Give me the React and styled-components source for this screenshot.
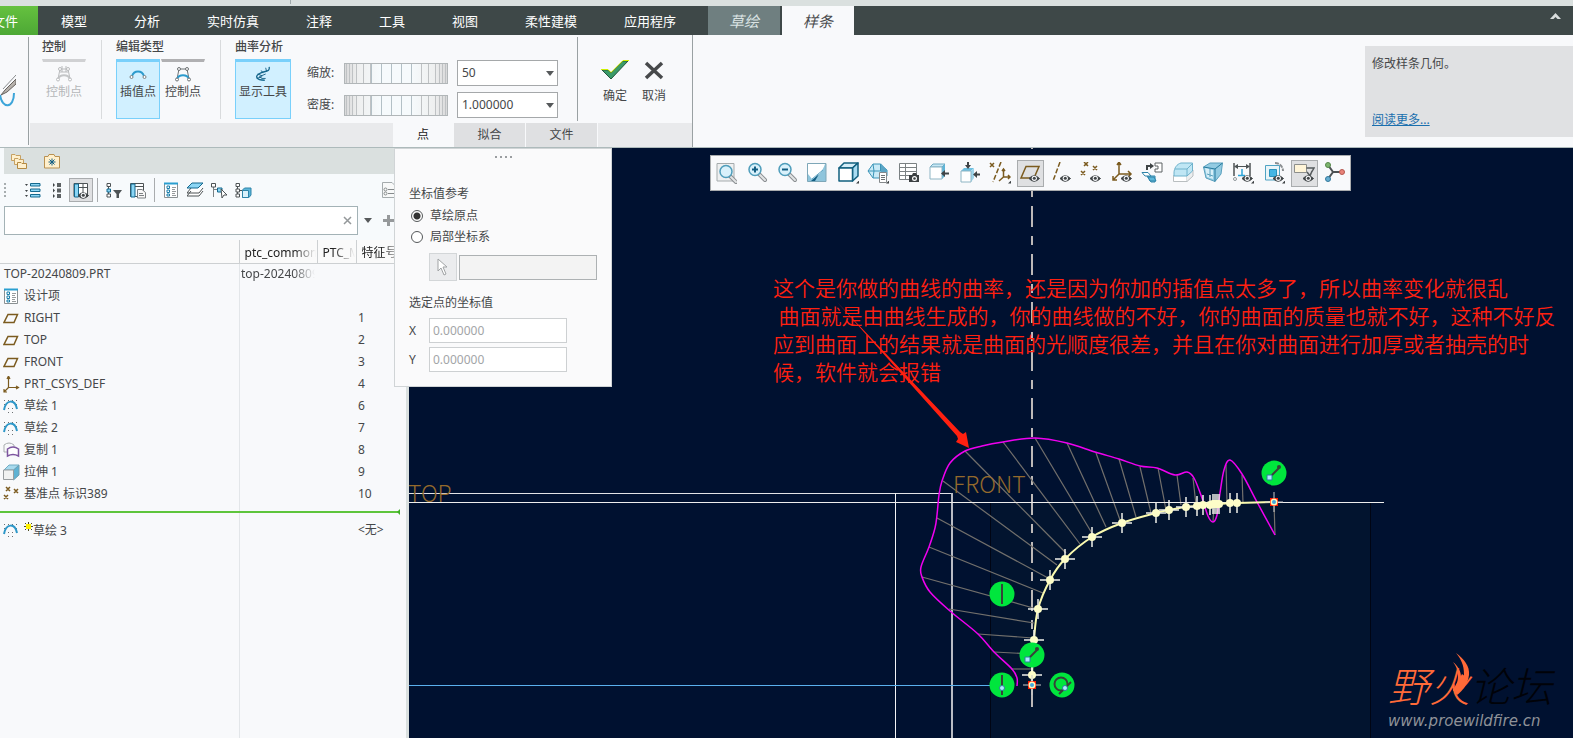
import React, { useState } from 'react';
import styled, { createGlobalStyle } from 'styled-components';

const TABS = ['模型', '分析', '实时仿真', '注释', '工具', '视图', '柔性建模', '应用程序'];

const FEATURES = [
  { icon: 'design', name: '设计项', id: '' },
  { icon: 'plane', name: 'RIGHT', id: '1' },
  { icon: 'plane', name: 'TOP', id: '2' },
  { icon: 'plane', name: 'FRONT', id: '3' },
  { icon: 'csys', name: 'PRT_CSYS_DEF', id: '4' },
  { icon: 'sketch', name: '草绘 1', id: '6' },
  { icon: 'sketch', name: '草绘 2', id: '7' },
  { icon: 'copy', name: '复制 1', id: '8' },
  { icon: 'extrude', name: '拉伸 1', id: '9' },
  { icon: 'points', name: '基准点 标识389', id: '10' },
];

const VIEW_TOOLS = [
  ['refit', '重新调整'], ['zoomIn', '放大'], ['zoomOut', '缩小'], ['repaint', '重画'],
  ['shading', '显示样式'], ['saved', '已保存方向'], ['manager', '视图管理器'],
  ['sideView', '视图法向'], ['topView', '草绘视图'], ['datum', '基准显示过滤器'],
  ['planeEye', '平面显示'], ['axisEye', '轴显示'], ['pointEye', '点显示'], ['csysEye', '坐标系显示'],
  ['swap', '切换'], ['clip', '修剪模型'], ['box', '透视图'], ['dimEye', '草绘器显示过滤器'],
  ['sectionEye', '截面'], ['noteEye', '注释显示'], ['spin', '旋转中心'],
];
const PRESSED_TOOLS = ['planeEye', 'noteEye'];

// comb of the curvature plot, [tip x, tip y, base x, base y]
const COMB = [
  [1011, 669, 1032, 669], [994, 652, 1032, 654], [978, 634, 1033, 638], [949, 609, 1034, 623],
  [922, 577, 1037, 609], [929, 547, 1043, 593], [937, 518, 1050, 579], [943, 481, 1057, 565],
  [965, 451, 1066, 553], [1003, 442, 1080, 544], [1035, 438, 1093, 535], [1067, 443, 1106, 527],
  [1096, 453, 1120, 520], [1119, 459, 1136, 517], [1140, 467, 1151, 513], [1158, 468, 1166, 510],
  [1177, 475, 1181, 505], [1193, 478, 1196, 505], [1213, 522, 1214, 505], [1226, 465, 1227, 503],
  [1242, 475, 1243, 503], [1274, 502, 1275, 535],
];

const CURVATURE = [
  [1017, 686], [1017, 678], [1012, 669], [994, 652], [978, 634], [950, 611], [930, 592],
  [922, 577], [921, 567], [929, 547], [935, 528], [937, 515], [939, 495], [942, 481],
  [950, 463], [965, 451], [982, 446], [1003, 442], [1035, 438], [1067, 443], [1095, 452],
  [1119, 459], [1140, 466], [1157, 468], [1175, 475], [1187, 472], [1194, 478], [1202, 498],
  [1208, 516], [1213, 522], [1217, 515], [1220, 493], [1224, 470], [1230, 460], [1242, 474],
  [1257, 502], [1275, 535],
];

const SPLINE = [
  [1032, 685], [1032, 675], [1034, 640], [1038, 609], [1050, 580], [1065, 559], [1092, 537],
  [1122, 523], [1156, 513], [1169, 510], [1186, 507], [1197, 506], [1203, 505], [1210, 505],
  [1213, 504], [1215, 504], [1217, 504], [1219, 504], [1230, 503], [1237, 503], [1274, 502],
];

function smoothPath(points) {
  let d = `M${points[0].join(' ')}`;
  for (let i = 0; i < points.length - 1; i += 1) {
    const p0 = points[i - 1] || points[i];
    const p1 = points[i];
    const p2 = points[i + 1];
    const p3 = points[i + 2] || p2;
    const c1 = [p1[0] + (p2[0] - p0[0]) / 6, p1[1] + (p2[1] - p0[1]) / 6];
    const c2 = [p2[0] - (p3[0] - p1[0]) / 6, p2[1] - (p3[1] - p1[1]) / 6];
    d += `C${c1.join(' ')} ${c2.join(' ')} ${p2.join(' ')}`;
  }
  return d;
}

const Eye = () => (
  <g>
    <path d="M9 16.500Q14 11 19.500 16.500Q14 22 9 16.500Z" fill="#3f4446" stroke="#3f4446" />
    <circle cx="14.300" cy="16.300" r="2.600" fill="#f8f9fb" />
    <circle cx="14.300" cy="16.300" r="1.500" fill="#3f4446" />
  </g>
);

const Corner = () => <path d="M22 17.500V21.500H18Z" fill="#3f4446" />;

const Magnifier = () => (
  <g>
    <path d="M12 12L18 18" stroke="#8b8f92" strokeWidth="4" strokeLinecap="round" />
    <path d="M13 13L18 18" stroke="#e2e4e5" strokeWidth="2" strokeLinecap="round" />
    <circle cx="8" cy="7.500" r="6" fill="#d9f1fb" stroke="#4f9dbb" strokeWidth="1.500" />
  </g>
);

const VIEW_ICONS = {
  refit: (
    <g>
      <path d="M1 1.500H18V19H1Z" fill="#eef0f1" stroke="#a5abad" />
      <g transform="translate(2 2)"><Magnifier /></g>
    </g>
  ),
  zoomIn: (
    <g>
      <Magnifier />
      <path d="M8 4.500V10.500M5 7.500H11" stroke="#125e83" strokeWidth="2" />
    </g>
  ),
  zoomOut: (
    <g>
      <Magnifier />
      <path d="M5 7.500H11" stroke="#125e83" strokeWidth="2" />
    </g>
  ),
  repaint: (
    <g>
      <path d="M.5 1.500H19V19.500H.5Z" fill="#8fc5dc" stroke="#7ea7b8" />
      <path d="M1 2H18C16 8 12 14 5 17L1 12Z" fill="#fff" />
      <path d="M4 19L12 12L8 19Z" fill="#125e83" />
      <path d="M5 17L16 8" stroke="#62a5c3" />
    </g>
  ),
  shading: (
    <g stroke="#12607f" strokeWidth="1.500" strokeLinejoin="round">
      <path d="M1 6L6 1H20L14.500 6Z" fill="#d3edf8" />
      <path d="M14.500 6L20 1V14L14.500 19Z" fill="#a9dcf2" />
      <path d="M1 6H14.500V19H1Z" fill="#fff" />
      <g stroke="none"><Corner /></g>
    </g>
  ),
  saved: (
    <g>
      <path d="M0 9L5 2H12L19 8V14H13V16H5Z" fill="#c9eaf7" stroke="#3b94b7" />
      <path d="M12.500 1L19 8V11H12.500Z" fill="#5aa5c6" />
      <path d="M0 9H12.500V2M5 2L6 9L5 16" stroke="#3b94b7" fill="none" />
      <path d="M11.500 10.500H18.500V20.500H11.500Z" fill="#fff" stroke="#85898b" />
      <path d="M13 13.500H17M13 15.500H17M13 17.500H17" stroke="#6d7173" />
      <Corner />
    </g>
  ),
  manager: (
    <g>
      <path d="M.5 1.500H17.500V17.500H.5ZM.5 5.500H17.500M.5 9.500H17.500M.5 13.500H17.500M6.500 1.500V17.500" fill="#fff" stroke="#7b8183" />
      <path d="M10 13H13L14 11H17L18 13H20V20H10Z" fill="#3c4042" />
      <circle cx="15.500" cy="16.500" r="2.500" fill="#fff" />
      <circle cx="15.500" cy="16.500" r="1.300" fill="#3c4042" />
    </g>
  ),
  sideView: (
    <g>
      <path d="M1 5L4 2H16L13 5Z" fill="#c8e8f5" stroke="#6ea9c1" />
      <path d="M13 5L16 2V14L13 17Z" fill="#5fb5d8" />
      <path d="M1 5H13V17H1Z" fill="#fff" stroke="#8eb5c4" />
      <path d="M20 11.500H14" stroke="#3f4446" strokeWidth="2" />
      <path d="M12 11.500L16 8V15Z" fill="#3f4446" />
    </g>
  ),
  topView: (
    <g>
      <path d="M1 9L4 6H14L11 9Z" fill="#6dbfe0" />
      <path d="M11 9L14 6V16L11 20Z" fill="#9fd6ec" />
      <path d="M1 9H11V20H1Z" fill="#fff" stroke="#8eb5c4" />
      <path d="M8 0V4M20 12.500H16" stroke="#3f4446" strokeWidth="2" />
      <path d="M8 7L5 3H11ZM13 12.500L17 9V16Z" fill="#3f4446" />
    </g>
  ),
  datum: (
    <g stroke="#7b5b1f" fill="none" strokeWidth="1.500">
      <path d="M0 1L4 5M4 1L0 5" />
      <path d="M11 0L3 20" strokeDasharray="5 2" />
      <path d="M13.500 7V15H20M13.500 15L9 19M12 9L13.500 7L15 9M18 13L20 15L18 17" />
      <g stroke="none"><Corner /></g>
    </g>
  ),
  planeEye: (
    <g>
      <path d="M6 4.500H19L14 16H1Z" fill="none" stroke="#7b5b1f" strokeWidth="1.500" />
      <Eye />
    </g>
  ),
  axisEye: (
    <g>
      <path d="M9 0L2 19" stroke="#7b5b1f" strokeWidth="1.500" strokeDasharray="5 2" />
      <Eye />
    </g>
  ),
  pointEye: (
    <g>
      <path d="M3 0L7 4M7 0L3 4M12 4L16 8M16 4L12 8M0 9L4 13M4 9L0 13" stroke="#7b5b1f" strokeWidth="1.500" />
      <Eye />
    </g>
  ),
  csysEye: (
    <g>
      <path d="M7 1V12H19M7 12L1 18M5 3L7 0L9 3M16 9L19 12L16 15M1 14V18H5" fill="none" stroke="#7b5b1f" strokeWidth="1.500" />
      <Eye />
    </g>
  ),
  swap: (
    <g>
      <path d="M5 8V4H9" stroke="#3f4446" fill="none" strokeWidth="2" />
      <path d="M12 4L8 1V7Z" fill="#3f4446" />
      <path d="M13 1H20V10H13V7H16V4H13Z" fill="#fff" stroke="#5d6264" />
      <path d="M5 14H13V20H9Z" fill="#8ed0ea" stroke="#2e84a9" />
      <path d="M0 10.500H6L9 14H3Z" fill="#fff" stroke="#2e84a9" />
      <path d="M6 15H12L14 19H8Z" fill="#5db6d9" stroke="#2e84a9" />
    </g>
  ),
  clip: (
    <g>
      <path d="M.5 13.500H14V19.500H.5Z" fill="#fff" stroke="#b9bec0" />
      <path d="M14 13L20 8V14L14 19.500" fill="#eceeef" stroke="#b9bec0" />
      <path d="M1 11C1 6 4 2 8 1H19.500V9L14 14H1Z" fill="#bfe6f4" stroke="#6fb2cc" />
      <path d="M2 7H14V14M14 7L19 2" stroke="#6fb2cc" fill="none" />
    </g>
  ),
  box: (
    <g>
      <path d="M.5 5L7 1H19.500L18 12L12 19.500L3 16Z" fill="#93cbe2" stroke="#5aa0bd" />
      <path d="M.5 5L12 7L19.500 1M12 7V19.500" stroke="#24799d" fill="none" />
      <path d="M2 6L10 8V17L4 15Z" fill="#d7eff8" />
      <path d="M7 7V15M4 12L10 14" stroke="#5aa0bd" />
    </g>
  ),
  dimEye: (
    <g>
      <path d="M1 1V14M17 1V14" stroke="#4d5355" strokeWidth="1.500" />
      <path d="M2 4.500H16" stroke="#4d5355" />
      <path d="M1 4.500L5 2V7ZM17 4.500L13 2V7Z" fill="#4d5355" />
      <path d="M9 7V13M5 13.500H12" stroke="#2ba4d8" strokeWidth="1.500" />
      <circle cx="2" cy="17" r="1.500" fill="#fff" stroke="#90979a" />
      <Eye />
      <Corner />
    </g>
  ),
  sectionEye: (
    <g>
      <path d="M1.500 3.500H15.500V18H1.500Z" fill="#e9f4f8" stroke="#4fa3c4" />
      <path d="M11 1C15 1 19 4 19 9" fill="none" stroke="#8b8f92" strokeWidth="2" strokeDasharray="4 1" />
      <path d="M5.500 7.500H12.500V14.500H5.500Z" fill="#45b6e4" stroke="#2b93bd" />
      <Eye />
      <Corner />
    </g>
  ),
  noteEye: (
    <g>
      <path d="M.5 2.500H12.500V10.500H.5Z" fill="#fff5d8" stroke="#8d8f8c" />
      <path d="M12.500 6H20L16 13M13 10L16 14L18 9" fill="none" stroke="#565b5d" strokeWidth="1.500" />
      <Eye />
    </g>
  ),
  spin: (
    <g>
      <path d="M3 3L8 10L3 17M8 10H17" stroke="#4c5153" strokeWidth="2" fill="none" />
      <circle cx="3" cy="3" r="2.500" fill="#7db56e" stroke="#55874a" />
      <circle cx="17" cy="10" r="2.500" fill="#e98379" stroke="#b45850" />
      <circle cx="3" cy="17" r="2.500" fill="#66add1" stroke="#34799c" />
    </g>
  ),
};

const TREE_ICONS = {
  design: (
    <g>
      <path d="M1.500 1.500H14.500V15.500H1.500Z" fill="#fff" stroke="#8a9093" />
      <path d="M1 1.500H15" stroke="#2a9fd0" strokeWidth="2" />
      <path d="M4 4H6.500V6.500H4ZM4 8H6.500V10.500H4ZM4 12H6.500V14H4Z" fill="none" stroke="#1b7fab" />
      <path d="M9 5.500H13M9 7.500H12M9 9.500H13M9 11.500H12M9 13.500H13" stroke="#979b9d" />
    </g>
  ),
  plane: <path d="M5 4.500H14.500L11 12.500H1Z" fill="none" stroke="#7b5b1f" strokeWidth="1.500" />,
  csys: <path d="M5.500 1V11.500H15M5.500 11.500L1 16M4 3L5.500 0L7 3M13 10L15.500 11.500L13 13M1 13V16H4" fill="none" stroke="#7b5b1f" strokeWidth="1.200" />,
  sketch: (
    <g>
      <path d="M1 2.500H16M1 6.500H4M13 6.500H16M5 10.500H12M5 14.500H13" stroke="#6d7173" strokeDasharray="1 3" />
      <path d="M1 12C3 1 12 1 14 11" fill="none" stroke="#2d97c8" strokeWidth="2" />
    </g>
  ),
  copy: (
    <g>
      <path d="M1 10V3Q6 -1 11 3V5M1 10H4" fill="none" stroke="#a9adaf" />
      <path d="M4.500 14V7Q10 3 15.500 7V14Q10 11 4.500 14Z" fill="#fff" stroke="#7d55a0" strokeWidth="1.500" />
    </g>
  ),
  extrude: (
    <g>
      <path d="M1 6L6 1H16L11 6Z" fill="#a7daee" stroke="#70acc4" />
      <path d="M10.500 6L16 1V11L10.500 16Z" fill="#5fb2d3" stroke="#70a0b2" />
      <path d="M.5 6H10.500V15.500H.5Z" fill="#f0f1f1" stroke="#989da0" />
    </g>
  ),
  points: <path d="M3 1L7 5M7 1L3 5M11 3L15 7M15 3L11 7M1 9L5 13M5 9L1 13" stroke="#7b5b1f" strokeWidth="1.500" />,
};

const TREE_TOOLS = {
  expand: (
    <g>
      <path d="M5.500 1.500H15V4H5.500ZM5.500 7H15V9.500H5.500ZM5.500 12.500H15V15H5.500Z" fill="#8bd6f5" stroke="#14688e" />
      <path d="M0 2H3L1.500 4ZM0 8H3L1.500 10ZM0 13H3L1.500 15Z" fill="#3f4446" />
    </g>
  ),
  collapse: (
    <g>
      <path d="M8 1H12V5H8ZM8 6.500H12V10.500H8ZM8 12H12V16H8Z" fill="#5c6163" />
      <path d="M4 1V5L6 3ZM4 6.500V10.500L6 8.500ZM4 12V16L6 14Z" fill="#3f4446" />
    </g>
  ),
  columns: (
    <g>
      <path d="M1 1.500H14.500V14.500H1Z" fill="#fff" stroke="#4d5355" />
      <path d="M1.500 2H5.500V15H1.500Z" fill="#8bd6f5" stroke="#14688e" />
      <path d="M5.500 5.500H14M10 2V14" stroke="#4d5355" />
      <g transform="translate(-4 -3)"><Eye /></g>
    </g>
  ),
  filter: (
    <g>
      <path d="M2.500 2V15" stroke="#4d5355" />
      <path d="M1 1.500H4.500V4.500H1ZM1 12H4.500V15H1Z" fill="#fff" stroke="#4d5355" />
      <path d="M1 7H4.500V10H1Z" fill="#8bd6f5" stroke="#14688e" />
      <path d="M7 8H16L13 12V16H10.500V12Z" fill="#4d5355" />
    </g>
  ),
  page: (
    <g>
      <path d="M.5 1.500H13.500V14.500H.5Z" fill="#fff" stroke="#4d5355" />
      <path d="M1 2H5V15H1Z" fill="#8bd6f5" stroke="#14688e" />
      <path d="M5 4.500H13" stroke="#4d5355" />
      <path d="M7.500 7.500H12L15.500 10.500V16H7.500Z" fill="#f7f7f7" stroke="#7c8183" />
      <path d="M9 11.500H13M9 13.500H14" stroke="#7c8183" />
    </g>
  ),
  design: TREE_ICONS.design,
  layers: (
    <g>
      <path d="M4 9L0 14H12L16 9M4 6L0 11H12L16 6" fill="#fff" stroke="#4d5355" />
      <path d="M5 1H16L11 6H0Z" fill="#8bd6f5" stroke="#14688e" />
    </g>
  ),
  select: (
    <g>
      <path d="M2.500 5V15M2.500 7.500H7" stroke="#7c8183" fill="none" />
      <path d="M.5 1.500H4.500V5H.5Z" fill="#fff" stroke="#4d5355" />
      <path d="M6.500 6H11V10H6.500Z" fill="#8bd6f5" stroke="#14688e" />
      <path d="M10 7L16 13H13L11 16Z" fill="#fff" stroke="#4d5355" />
    </g>
  ),
  model: (
    <g>
      <path d="M2.500 2V15M4 8.500H8" stroke="#4d5355" />
      <path d="M1 1.500H4.500V4.500H1ZM1 7H4.500V10H1ZM1 12H4.500V15H1Z" fill="#fff" stroke="#4d5355" />
      <path d="M7.500 8L9.500 6H16V13L14 15.500H7.500Z" fill="#5db6d9" stroke="#2e84a9" />
      <path d="M7.500 8.500H13.500V15.500H7.500Z" fill="#d9f1fb" stroke="#2e84a9" />
    </g>
  ),
};

const FolderStack = () => (
  <svg width="17" height="17" viewBox="0 0 17 17" aria-hidden="true">
    <path d="M.5 1.500H4L5 2.500H9.500V7.500H.5Z" fill="#fff0cd" stroke="#c6a162" />
    <path d="M3.500 5.500H7L8 6.500H12.500V11.500H3.500Z" fill="#fff0cd" stroke="#c6a162" />
    <path d="M6.500 9.500H10L11 10.500H15.500V15.500H6.500Z" fill="#fff0cd" stroke="#b48a43" />
  </svg>
);

const FolderStar = () => (
  <svg width="16" height="16" viewBox="0 0 16 16" aria-hidden="true">
    <path d="M.5 3.500H4L5 1.500H10L11 3.500H15.500V15H.5Z" fill="#fff0cd" stroke="#b99151" />
    <path d="M8 5.500V12.500M4.500 9H11.500M5.500 6.500L10.500 11.500M10.500 6.500L5.500 11.500" stroke="#125e83" />
  </svg>
);

const ArcIcon = ({ $kind }) => (
  <svg width="18" height="16" viewBox="0 0 18 16" aria-hidden="true">
    {$kind === 'interp' && (
      <g fill="none">
        <path d="M3 10C5 4 13 4 15 10" stroke="#2d9bcd" strokeWidth="2" />
        <circle cx="2.500" cy="11" r="1.500" fill="#fff" stroke="#7c8183" />
        <circle cx="15.500" cy="11" r="1.500" fill="#fff" stroke="#7c8183" />
      </g>
    )}
    {$kind !== 'interp' && (
      <g fill="none" stroke={$kind === 'off' ? '#b9bbbd' : '#6d7274'}>
        <path d="M3 13L5 3H13L15 13" />
        <path d="M3 13C5 8 13 8 15 13" stroke={$kind === 'off' ? '#c4c6c8' : '#2d9bcd'} strokeWidth="2" />
        <circle cx="3" cy="13.500" r="1.500" fill="#fff" />
        <circle cx="15" cy="13.500" r="1.500" fill="#fff" />
        <circle cx="5" cy="3" r="1.500" fill="#fff" />
        <circle cx="13" cy="3" r="1.500" fill="#fff" />
        {$kind === 'off' && <path d="M7 0V6M11 0V6M5 6H13" />}
      </g>
    )}
  </svg>
);

const CombIcon = () => (
  <svg width="18" height="18" viewBox="0 0 18 18" fill="none" aria-hidden="true">
    <path d="M16 1C17 7 12 5 6 8C-1 11 1 16 11 16" stroke="#14688e" strokeWidth="1.500" />
    <path d="M12 2L13 6M7 5L9 8M3 9L8 11M2 14L8 12M12 9L5 12Q7 15 12 14" stroke="#125e83" />
  </svg>
);

const PencilIcon = () => (
  <svg width="16" height="34" viewBox="0 0 16 34" fill="none" aria-hidden="true">
    <path d="M0 20C2 34 14 34 14 18" stroke="#3da5d9" strokeWidth="2" />
    <path d="M16 4L5 15L1 20L7 17L16 9Z" fill="#b6b1ac" stroke="#67625e" />
    <path d="M16 0L3 14" stroke="#8a8d8f" />
  </svg>
);

const Arrow = () => (
  <svg width="8" height="5" viewBox="0 0 8 5" aria-hidden="true">
    <path d="M0 0H8L4 5Z" fill="#56595b" />
  </svg>
);

function Badge({ x, y, kind }) {
  return (
    <g transform={`translate(${x} ${y})`} stroke="#374238" strokeWidth="2" fill="none">
      <circle r="12.500" fill="#00e63d" stroke="none" />
      {kind === 'vertical' && <path d="M0 -10V10" />}
      {kind === 'on' && (
        <g>
          <path d="M0 -10V10" />
          <circle cy="3" r="2.500" fill="#aee9ff" stroke="#2c7f9c" strokeWidth="1" />
        </g>
      )}
      {kind === 'link' && (
        <g>
          <path d="M-3 3L5 -5" />
          <circle cx="5" cy="-6" r="2" fill="#374238" stroke="none" />
          <path d="M-7 2H-2V7H-7Z" fill="#aee9ff" stroke="#2c7f9c" strokeWidth="1" />
        </g>
      )}
      {kind === 'tangent' && (
        <g>
          <circle cx="-1" cy="-1" r="6.500" />
          <path d="M-3 9L9 -3" strokeDasharray="5 7" />
          <circle cx="3" cy="3" r="2.500" fill="#aee9ff" stroke="#2c7f9c" strokeWidth="1" />
        </g>
      )}
    </g>
  );
}

const EndPoint = ({ x, y }) => (
  <g transform={`translate(${x} ${y})`}>
    <path d="M0 -10V10M-9 0H9" stroke="#c9c9c9" />
    <path d="M-4 -4H4V4H-4Z" fill="#ff1a00" />
    <circle r="3.500" fill="#fff7b8" />
    <circle r="2" fill="#41a8e0" />
  </g>
);

function SplineView() {
  return (
    <Drawing viewBox="409 148 1164 590" preserveAspectRatio="xMinYMin meet" aria-hidden="true">
      <path d="M990 503H1370V738H990Z" fill="#02142f" />
      <path d="M990.500 503V738M1370.500 503V738" stroke="#000514" />
      <g stroke="#b9bcc4" strokeWidth="1">
        <path d="M409 493.500H952" stroke="#e2e3e6" />
        <path d="M952 493V738" strokeWidth="2" />
        <path d="M895.500 493V738" stroke="#f2f3f5" />
      </g>
      <path d="M409 685.500H1000" stroke="#5ab0ee" strokeWidth="1" />
      <path d="M1032 110V708" stroke="#bdb9b8" strokeWidth="2" strokeDasharray="21 9 9 9" />
      <path d="M1032 660V707" stroke="#bdb9b8" strokeWidth="2" />
      <g stroke="#72706c" strokeWidth="1.200">
        {COMB.map(([x1, y1, x2, y2]) => (
          <line key={`${x1}-${y1}`} x1={x1} y1={y1} x2={x2} y2={y2} />
        ))}
      </g>
      <CadText x="408" y="502">TOP</CadText>
      <CadText x="953" y="493">FRONT</CadText>
      <path d="M409 502.500H1384" stroke="#eeeeee" />
      <path d={smoothPath(CURVATURE)} fill="none" stroke="#f000f0" strokeWidth="1.500" />
      <path d={smoothPath(SPLINE)} fill="none" stroke="#fbfbb0" strokeWidth="2" />
      {SPLINE.slice(1, -1).map(([x, y]) => (
        <g key={x} transform={`translate(${x} ${y})`}>
          <path d={x > 1190 ? 'M0 -10V10' : 'M0 -10V10M-10 0H10'} stroke="#f0f0ea" strokeWidth="1.500" />
          <circle r="4" fill="#fdfdc8" />
        </g>
      ))}
      <EndPoint x="1032" y="685" />
      <EndPoint x="1274" y="502" />
      <Badge x="1002" y="594" kind="vertical" />
      <Badge x="1032" y="655" kind="link" />
      <Badge x="1002" y="685" kind="on" />
      <Badge x="1062" y="685" kind="tangent" />
      <Badge x="1274" y="473" kind="link" />
    </Drawing>
  );
}

function ModelTree() {
  return (
    <TreeArea>
      <TreeTable>
        <colgroup>
          <col width="239" />
          <col width="78" />
          <col width="39" />
          <col />
        </colgroup>
        <thead>
          <tr>
            <th aria-label="名称" />
            <th><Faded>ptc_common</Faded></th>
            <th><Faded>PTC_M</Faded></th>
            <th><Faded>特征号</Faded></th>
          </tr>
        </thead>
        <tbody>
          <tr>
            <td>TOP-20240809.PRT</td>
            <PlainCell><Faded>top-20240809</Faded></PlainCell>
            <td />
            <td />
          </tr>
          {FEATURES.map((feature) => (
            <tr key={feature.name}>
              <td>
                <FeatureName>
                  <svg width="17" height="17" viewBox="0 0 17 17" aria-hidden="true">{TREE_ICONS[feature.icon]}</svg>
                  {feature.name}
                </FeatureName>
              </td>
              <td />
              <td />
              <IdCell>{feature.id}</IdCell>
            </tr>
          ))}
          <InsertRow>
            <td colSpan="4"><InsertLine /></td>
          </InsertRow>
          <tr>
            <td>
              <FeatureName>
                <svg width="17" height="17" viewBox="0 0 17 17" aria-hidden="true">{TREE_ICONS.sketch}</svg>
                <span>
                  <NewMark width="9" height="9" viewBox="0 0 9 9" aria-hidden="true">
                    <path d="M4.500 0V9M0 4.500H9M1 1L8 8M8 1L1 8" stroke="#4a4a20" />
                    <path d="M2 2H7V7H2Z" fill="#fff200" />
                  </NewMark>
                  草绘 3
                </span>
              </FeatureName>
            </td>
            <td />
            <td />
            <IdCell>&lt;无&gt;</IdCell>
          </tr>
        </tbody>
      </TreeTable>
    </TreeArea>
  );
}

function PointPanel() {
  const [origin, setOrigin] = useState('sketch');

  return (
    <PointFlyout>
      <Grip>
        <i />
        <i />
        <i />
        <i />
      </Grip>
      <FlyoutTitle>坐标值参考</FlyoutTitle>
      <RadioRow>
        <input type="radio" name="origin" checked={origin === 'sketch'} onChange={() => setOrigin('sketch')} />
        草绘原点
      </RadioRow>
      <RadioRow>
        <input type="radio" name="origin" checked={origin === 'local'} onChange={() => setOrigin('local')} />
        局部坐标系
      </RadioRow>
      <PickRow>
        <PickButton type="button" aria-label="选择坐标系" disabled>
          <svg width="12" height="18" viewBox="0 0 12 18" aria-hidden="true">
            <path d="M1 1V13L4 10L7 17L9 16L6 9H10Z" fill="#fff" stroke="#a0a3a5" />
          </svg>
        </PickButton>
        <PickField type="text" aria-label="坐标系" disabled />
      </PickRow>
      <FlyoutTitle>选定点的坐标值</FlyoutTitle>
      <CoordRow>
        <label htmlFor="coordX">X</label>
        <input id="coordX" type="text" defaultValue="0.000000" disabled />
      </CoordRow>
      <CoordRow>
        <label htmlFor="coordY">Y</label>
        <input id="coordY" type="text" defaultValue="0.000000" disabled />
      </CoordRow>
    </PointFlyout>
  );
}

export default function App() {
  return (
    <Page>
      <GlobalStyle />
      <TitleStrip />
      <TabBar>
        <FileTab type="button"><span>文件</span></FileTab>
        {TABS.map((tab) => <Tab key={tab} type="button">{tab}</Tab>)}
        <ContextTab type="button" $first>草绘</ContextTab>
        <ContextTab type="button" $active>样条</ContextTab>
        <Collapse type="button" aria-label="最小化功能区">
          <svg width="11" height="7" viewBox="0 0 11 7" aria-hidden="true">
            <path d="M5.500 0L11 6H7.500L5.500 4L3.500 6H0Z" fill="#d8dcdc" />
          </svg>
        </Collapse>
      </TabBar>

      <Ribbon>
        <PencilSlot><PencilIcon /></PencilSlot>
        <Dashboard>
          <Groups>
            <Group>
              <h2>控制</h2>
              <Tools>
                <ToolButton type="button" disabled>
                  <ArcIcon $kind="off" />
                  控制点
                </ToolButton>
              </Tools>
            </Group>
            <Group>
              <h2>编辑类型</h2>
              <Tools>
                <ToolButton type="button" $active>
                  <ArcIcon $kind="interp" />
                  插值点
                </ToolButton>
                <ToolButton type="button">
                  <ArcIcon $kind="control" />
                  控制点
                </ToolButton>
              </Tools>
            </Group>
            <Group>
              <h2>曲率分析</h2>
              <Tools>
                <ToolButton type="button" $active $wide>
                  <CombIcon />
                  显示工具
                </ToolButton>
                <Scales>
                  <label htmlFor="scale">缩放:</label>
                  <Wheel type="range" aria-label="缩放" />
                  <Combo>
                    <select id="scale"><option>50</option></select>
                    <Arrow />
                  </Combo>
                  <label htmlFor="density">密度:</label>
                  <Wheel type="range" aria-label="密度" />
                  <Combo>
                    <select id="density"><option>1.000000</option></select>
                    <Arrow />
                  </Combo>
                </Scales>
              </Tools>
            </Group>
            <Confirm>
              <ConfirmButton type="button">
                <svg width="28" height="20" viewBox="0 0 28 20" aria-hidden="true">
                  <path d="M1 10H7L10 13L22 1H27L10 19Z" fill="#3a9a68" stroke="#22573a" />
                  <path d="M0 9.500H7L10 12.500L22 .5H28" fill="none" stroke="#cdf000" />
                </svg>
                确定
              </ConfirmButton>
              <ConfirmButton type="button">
                <svg width="20" height="20" viewBox="0 0 20 20" aria-hidden="true">
                  <path d="M2 3L18 18M18 3L2 18" stroke="#47494b" strokeWidth="3.500" />
                </svg>
                取消
              </ConfirmButton>
            </Confirm>
          </Groups>
          <SubTabs>
            <SubTab type="button" $active>点</SubTab>
            <SubTab type="button">拟合</SubTab>
            <SubTab type="button">文件</SubTab>
          </SubTabs>
        </Dashboard>
        <Help>
          <p>修改样条几何。</p>
          <a href="#more">阅读更多...</a>
        </Help>
      </Ribbon>

      <Work>
        <Navigator>
          <NavTabs>
            <FolderStack />
            <FolderStar />
          </NavTabs>
          <TreeBar>
            <TreeGrip />
            {Object.entries(TREE_TOOLS).map(([name, drawing]) => (
              <TreeTool
                key={name}
                type="button"
                aria-label={name}
                $pressed={name === 'columns'}
                $divided={name === 'filter' || name === 'design'}
              >
                <svg width="17" height="17" viewBox="0 0 17 17" aria-hidden="true">{drawing}</svg>
              </TreeTool>
            ))}
            <TreeSettings type="button" aria-label="设置">
              <svg width="16" height="17" viewBox="0 0 16 17" aria-hidden="true">
                <path d="M.5 .5H10L15.500 6V15.500H.5Z" fill="#f8f9f9" stroke="#a5abad" />
                <path d="M6 7.500H12M6 11.500H12" stroke="#85898b" />
                <circle cx="3.500" cy="7.500" r="1.500" fill="none" stroke="#85898b" />
                <circle cx="3.500" cy="11.500" r="1.500" fill="none" stroke="#85898b" />
              </svg>
            </TreeSettings>
          </TreeBar>
          <SearchRow>
            <SearchBox>
              <input type="text" aria-label="搜索" />
              <button type="button" aria-label="清除">
                <svg width="9" height="9" viewBox="0 0 9 9" aria-hidden="true">
                  <path d="M1 1L8 8M8 1L1 8" stroke="#94989a" strokeWidth="1.500" />
                </svg>
              </button>
            </SearchBox>
            <SearchAction type="button" aria-label="搜索选项"><Arrow /></SearchAction>
            <SearchAction type="button" aria-label="添加">
              <svg width="11" height="11" viewBox="0 0 11 11" aria-hidden="true">
                <path d="M5.500 0V11M0 5.500H11" stroke="#96999b" strokeWidth="3" />
              </svg>
            </SearchAction>
          </SearchRow>
          <ModelTree />
        </Navigator>

        <Canvas>
          <SplineView />
          <Remark>
            {'这个是你做的曲线的曲率，还是因为你加的插值点太多了，所以曲率变化就很乱\n 曲面就是由曲线生成的，你的曲线做的不好，你的曲面的质量也就不好，这种不好反\n应到曲面上的结果就是曲面的光顺度很差，并且在你对曲面进行加厚或者抽壳的时\n候，软件就会报错'}
          </Remark>
          <Pointer width="136" height="150" viewBox="836 300 136 150" aria-hidden="true">
            <path d="M837 302L960 432L963 434L966 432L969 448L956 442L958 439L957 436Z" fill="#ff2010" />
          </Pointer>
          <ViewBar>
            {VIEW_TOOLS.map(([name, label]) => (
              <ViewButton key={name} type="button" aria-label={label} $pressed={PRESSED_TOOLS.includes(name)}>
                <svg width="22" height="22" viewBox="-1 0 22 22" aria-hidden="true">{VIEW_ICONS[name]}</svg>
              </ViewButton>
            ))}
          </ViewBar>
          <Watermark>
            <Brand>
              <b>野火</b>
              论坛
              <Flame width="22" height="46" viewBox="0 0 22 46" aria-hidden="true">
                <path d="M6 3C14 9 20 16 19 25C18 33 13 41 7 45L3 40C9 36 14 31 14 24C14 15 11 9 6 3Z" fill="#ff6a38" />
                <path d="M3 12C8 16 11 21 11 27C11 33 9 38 5 42L3 40C7 35 8 31 8 26C8 20 6 16 3 12Z" fill="#ff6a38" />
                <path d="M12 24L16 27L8 44L3 40Z" fill="#ff6a38" />
              </Flame>
            </Brand>
            <Site>www.proewildfire.cn</Site>
          </Watermark>
        </Canvas>
        <PointPanel />
      </Work>
    </Page>
  );
}

const GlobalStyle = createGlobalStyle`
* {
  box-sizing: border-box;
}
body {
  margin: 0;
  font-family: 'Noto Sans', 'Noto Sans CJK SC', sans-serif;
  font-size: 12px;
  line-height: 16px;
  color: #454749;
}
button, input, select {
  font: inherit;
  color: inherit;
  margin: 0;
}
button {
  border: none;
  background: none;
  padding: 0;
}
h2, p {
  margin: 0;
}
svg {
  flex: none;
}
`;

const Page = styled.div`
  display: flex;
  flex-direction: column;
  min-height: 100vh;
  overflow: hidden;
`;

const TitleStrip = styled.div`
  height: 6px;
  background: #dae0df;
  &::before {
    content: '';
    display: block;
    width: 290px;
    height: 4px;
    border-right: 1px solid #a2abad;
  }
`;

const TabBar = styled.nav`
  display: flex;
  gap: 1px;
  height: 29px;
  background: #3e4848;
`;

const Tab = styled.button`
  padding: 0 23px;
  font-size: 13px;
  color: #fff;
`;

const FileTab = styled.button`
  display: flex;
  justify-content: flex-end;
  align-items: center;
  width: 38px;
  margin-right: -1px;
  padding-right: 20px;
  overflow: hidden;
  font-size: 13px;
  color: #fff;
  background: linear-gradient(#65c13f, #4da835);
  span {
    white-space: nowrap;
  }
`;

const ContextTab = styled.button`
  width: 72px;
  margin-left: ${(props) => (props.$first ? '8px' : '1px')};
  font-size: 15px;
  font-style: italic;
  color: ${(props) => (props.$active ? '#4a4c4e' : '#dbe4e4')};
  background: ${(props) => (props.$active ? '#f8f9fb' : '#6f7f80')};
`;

const Collapse = styled.button`
  display: flex;
  margin: 7px 12px 0 auto;
`;

const Ribbon = styled.header`
  display: flex;
  height: 113px;
  background: #f8f9fb;
  border-bottom: 1px solid #adbabb;
`;

const PencilSlot = styled.div`
  width: 29px;
  margin: 2px 1px 2px 0;
  padding-top: 38px;
  border-right: 1px solid #9aa1a3;
`;

const Dashboard = styled.div`
  display: flex;
  flex-direction: column;
  width: 663px;
  border-right: 1px solid #9aa1a3;
`;

const Groups = styled.div`
  display: flex;
  flex: 1;
  padding-left: 12px;
`;

const Group = styled.section`
  margin: 5px 14px 4px 0;
  padding-right: 15px;
  border-right: 1px solid #d9dbdd;
  h2 {
    height: 19px;
    font-size: 12px;
    line-height: 14px;
    font-weight: 500;
  }
  &:nth-child(3) {
    margin-right: 0;
    padding-right: 0;
    border: none;
  }
`;

const Tools = styled.div`
  display: flex;
  gap: 1px;
`;

const ToolButton = styled.button`
  display: flex;
  flex-direction: column;
  align-items: center;
  gap: 2px;
  width: ${(props) => (props.$wide ? '56px' : '44px')};
  height: 60px;
  padding-top: 4px;
  white-space: nowrap;
  border: ${(props) => (props.$active ? '1px solid #79d0fb' : '1px solid transparent')};
  border-top: 3px solid ${(props) => (props.$active ? '#79d0fb' : '#b0b0b2')};
  background: ${(props) => (props.$active ? '#d1f0ff' : 'none')};
  svg {
    height: 16px;
  }
  &:disabled {
    color: #b5b7b9;
    border-top-color: #d0d1d3;
  }
`;

const Scales = styled.div`
  display: grid;
  grid-template-columns: 28px 104px 101px;
  column-gap: 9px;
  row-gap: 6px;
  align-items: center;
  align-self: flex-start;
  margin-left: 15px;
  padding-top: 1px;
  label {
    white-space: nowrap;
  }
`;

const Wheel = styled.input`
  appearance: none;
  width: 104px;
  height: 21px;
  border: 1px solid #b1b6b8;
  background:
    repeating-linear-gradient(90deg, #bfc2c4 0 1px, transparent 1px 3px) 1px 0 / 8px 100% no-repeat,
    repeating-linear-gradient(90deg, #bfc2c4 0 1px, transparent 1px 3px) 94px 0 / 8px 100% no-repeat,
    repeating-linear-gradient(90deg, #bfc2c4 0 1px, transparent 1px 7px) 11px 0 / 15px 100% no-repeat,
    repeating-linear-gradient(90deg, #bfc2c4 0 1px, transparent 1px 7px) 76px 0 / 15px 100% no-repeat,
    repeating-linear-gradient(90deg, #b3c0c6 0 1px, transparent 1px 10px) 26px 0 / 51px 100% no-repeat,
    linear-gradient(90deg, #d9d9da, #eeefef 12%, #f6fafc 35%, #f6fafc 65%, #eeefef 88%, #d9d9da);
  &::-webkit-slider-thumb {
    appearance: none;
  }
`;

const Combo = styled.div`
  display: flex;
  align-items: center;
  height: 26px;
  padding-right: 3px;
  border: 1px solid #a5a8aa;
  background: #fff;
  select {
    flex: 1;
    appearance: none;
    padding: 0 4px;
    border: none;
    background: none;
  }
`;

const Confirm = styled.div`
  display: flex;
  gap: 13px;
  margin: 2px 0 2px 19px;
  padding: 23px 0 0 23px;
  border-left: 1px solid #9aa1a3;
`;

const ConfirmButton = styled.button`
  display: flex;
  flex-direction: column;
  align-items: center;
  gap: 8px;
  align-self: flex-start;
  min-width: 24px;
`;

const SubTabs = styled.div`
  display: flex;
  flex: none;
  gap: 1px;
  height: 24px;
  padding-left: 363px;
  background: #e9eaec;
`;

const SubTab = styled.button`
  width: ${(props) => (props.$active ? '60px' : '71px')};
  color: ${(props) => (props.$active ? '#222' : '#454749')};
  background: ${(props) => (props.$active ? '#f8f9fb' : '#dfe0e2')};
  box-shadow: 1px 0 #f8f9fb;
`;

const Help = styled.aside`
  display: flex;
  flex-direction: column;
  justify-content: space-between;
  width: 208px;
  height: 91px;
  margin: 11px 0 0 auto;
  padding: 10px 7px 9px;
  background: #e0e1e3;
  a {
    align-self: flex-start;
    color: #1a6fae;
  }
`;

const Work = styled.main`
  position: relative;
  display: flex;
  flex: 1;
`;

const Navigator = styled.aside`
  display: flex;
  flex-direction: column;
  width: 409px;
  border-right: 3px solid #dae0df;
  background: #f7fafc;
`;

const NavTabs = styled.div`
  display: flex;
  align-items: center;
  gap: 16px;
  height: 26px;
  margin-left: 4px;
  padding-left: 7px;
  background: #dae0df;
`;

const TreeBar = styled.div`
  display: flex;
  align-items: center;
  height: 32px;
`;

const TreeGrip = styled.span`
  width: 2px;
  height: 14px;
  margin: 0 15px 0 4px;
  background: repeating-linear-gradient(#a7adaf 0 2px, transparent 2px 4px);
`;

const TreeTool = styled.button`
  display: flex;
  align-items: center;
  justify-content: center;
  position: relative;
  width: 24px;
  height: 24px;
  margin-left: ${(props) => (props.$divided ? '9px' : '0')};
  border: 1px solid ${(props) => (props.$pressed ? '#a9acae' : 'transparent')};
  background: ${(props) => (props.$pressed ? '#dfe0e2' : 'none')};
  &::before {
    content: ${(props) => (props.$divided ? "''" : 'none')};
    position: absolute;
    left: -6px;
    width: 1px;
    height: 24px;
    background: #a9acae;
  }
`;

const TreeSettings = styled.button`
  display: flex;
  margin: 0 8px 0 auto;
`;

const SearchRow = styled.div`
  display: flex;
  align-items: center;
  padding-left: 4px;
`;

const SearchBox = styled.div`
  display: flex;
  align-items: center;
  width: 354px;
  height: 29px;
  border: 1px solid #a3b2b6;
  background: #fff;
  input {
    flex: 1;
    min-width: 0;
    border: none;
    outline: none;
    background: none;
  }
  button {
    display: flex;
    padding: 0 5px;
  }
`;

const SearchAction = styled.button`
  display: flex;
  justify-content: center;
  width: 20px;
`;

const TreeArea = styled.div`
  flex: 1;
  margin-top: 5px;
  background: linear-gradient(#e3e6e9, #e3e6e9) 239px 23px / 1px 100% no-repeat, #f8f9fb;
`;

const TreeTable = styled.table`
  width: 100%;
  table-layout: fixed;
  border-collapse: collapse;
  th {
    height: 23px;
    padding: 3px 1px 0 5px;
    font-weight: 400;
    text-align: left;
    color: #222;
    background: #fafafa;
    border-bottom: 1px solid #cdd0d2;
  }
  th + th {
    border-left: 1px solid #cdd0d2;
  }
  td {
    height: 22px;
    padding: 0 0 0 4px;
    white-space: nowrap;
  }
`;

const PlainCell = styled.td`
  && {
    padding: 0 0 0 2px;
  }
`;

const IdCell = styled.td`
  && {
    padding-left: 2px;
  }
`;

const Faded = styled.span`
  display: block;
  max-width: 74px;
  overflow: hidden;
  white-space: nowrap;
  mask-image: linear-gradient(90deg, #000 calc(100% - 22px), transparent);
`;

const FeatureName = styled.span`
  display: flex;
  align-items: center;
  gap: 4px;
  margin-left: -1px;
`;

const NewMark = styled.svg`
  vertical-align: 4px;
`;

const InsertRow = styled.tr`
  && td {
    height: 14px;
    padding: 2px 6px 0 0;
  }
`;

const InsertLine = styled.div`
  height: 2px;
  background: #5ec53c;
  &::after {
    content: '';
    float: right;
    margin-top: -2px;
    border: 3px solid transparent;
    border-left: none;
    border-right-color: #3fae26;
  }
`;

const PointFlyout = styled.section`
  position: absolute;
  top: 0;
  left: 394px;
  display: flex;
  flex-direction: column;
  width: 218px;
  height: 239px;
  padding: 7px 14px 0;
  border: 1px solid #d0d4d6;
  background: #fafafb;
`;

const Grip = styled.div`
  display: flex;
  justify-content: center;
  gap: 3px;
  height: 30px;
  i {
    width: 2px;
    height: 2px;
    background: #9a9da0;
  }
`;

const FlyoutTitle = styled.p`
  margin-bottom: 3px;
`;

const RadioRow = styled.label`
  display: flex;
  align-items: center;
  gap: 7px;
  height: 21px;
  padding-left: 2px;
  input {
    appearance: none;
    width: 12px;
    height: 12px;
    border: 1px solid #55585a;
    border-radius: 50%;
    background: #fff;
  }
  input:checked {
    background: radial-gradient(circle, #333 0 3px, #fff 4px);
  }
`;

const PickRow = styled.div`
  display: flex;
  align-items: center;
  gap: 2px;
  margin: 6px 0 14px 20px;
`;

const PickButton = styled.button`
  display: flex;
  align-items: center;
  justify-content: center;
  width: 28px;
  height: 28px;
  border: 1px solid #d3d6d8;
  background: #ebecee;
`;

const PickField = styled.input`
  width: 138px;
  height: 25px;
  border: 1px solid #adb1b3;
  background: #f3f3f3;
`;

const CoordRow = styled.div`
  display: flex;
  align-items: center;
  height: 25px;
  margin-top: 4px;
  label {
    width: 20px;
  }
  input {
    width: 138px;
    height: 25px;
    padding: 0 3px;
    border: 1px solid #cdd0d2;
    color: #a3a5a7;
    background: #fff;
  }
`;

const Canvas = styled.div`
  position: relative;
  flex: 1;
  min-width: 0;
  background: #001130;
`;

const Drawing = styled.svg`
  position: absolute;
  inset: 0;
  width: 100%;
  height: 100%;
`;

const CadText = styled.text`
  font-family: 'Noto Sans CJK SC', sans-serif;
  font-size: 23px;
  font-weight: 300;
  fill: #946a2c;
`;

const Remark = styled.p`
  position: absolute;
  top: 126px;
  left: 364px;
  font-size: 21px;
  line-height: 28px;
  font-weight: 350;
  white-space: pre;
  color: #ff2010;
`;

const Pointer = styled.svg`
  position: absolute;
  top: 152px;
  left: 427px;
`;

const ViewBar = styled.div`
  position: absolute;
  top: 7px;
  left: 301px;
  display: flex;
  align-items: center;
  justify-content: space-around;
  width: 641px;
  height: 36px;
  border: 1px solid #a9acae;
  background: #f8f9fb;
`;

const ViewButton = styled.button`
  display: flex;
  align-items: center;
  justify-content: center;
  width: 27px;
  height: 27px;
  border: 1px solid ${(props) => (props.$pressed ? '#a9acae' : 'transparent')};
  background: ${(props) => (props.$pressed ? '#dfe0e2' : 'none')};
`;

const Watermark = styled.div`
  position: absolute;
  right: 20px;
  bottom: 8px;
  width: 165px;
`;

const Brand = styled.div`
  position: relative;
  font-size: 41px;
  line-height: 52px;
  font-weight: 300;
  font-style: italic;
  white-space: nowrap;
  color: #000208;
  b {
    font-weight: 300;
    color: #ff6a38;
  }
`;

const Flame = styled.svg`
  position: absolute;
  left: 62px;
  top: -10px;
`;

const Site = styled.div`
  font-family: 'DejaVu Sans', sans-serif;
  font-size: 15px;
  line-height: 18px;
  font-style: italic;
  color: #8f9298;
`;
